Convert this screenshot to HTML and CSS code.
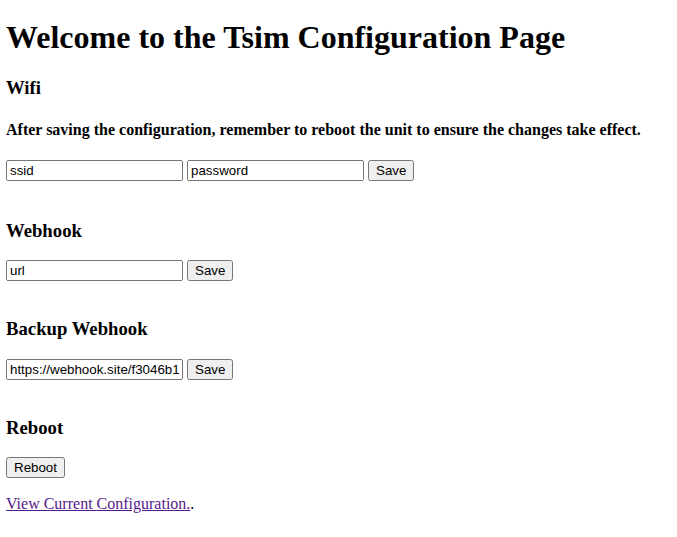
FILE: index.html
```html
<!DOCTYPE html>
<html>
<head>
<meta charset="utf-8">
<title>Tsim Configuration</title>
<link rel="stylesheet" href="styles.css">
</head>
<body>
<h1 class="title">Welcome to the Tsim Configuration Page</h1>
<h3>Wifi</h3>
<h4>After saving the configuration, remember to reboot the unit to ensure the changes take effect.</h4>
<form class="row first">
<input type="text" value="ssid"> <input type="text" value="password"> <button type="button">Save</button>
</form>
<br>
<h3>Webhook</h3>
<form class="row">
<input type="text" value="url"> <button type="button">Save</button>
</form>
<br>
<h3>Backup Webhook</h3>
<form class="row">
<input type="text" value="https://webhook.site/f3046b1c-2d7e-4a1b-9f0e-1234567890ab"> <button type="button">Save</button>
</form>
<br>
<h3>Reboot</h3>
<form class="row">
<button type="button">Reboot</button>
</form>
<p class="links"><a class="visited" href="#config">View Current Configuration.</a>.</p>
</body>
</html>
```
FILE: styles.css
```css
body {
  margin: 0 6px 8px;
  font-family: "Liberation Serif", "Times New Roman", serif;
  font-size: 16px;
  color: #000;
  background: #fff;
}
.title { margin-top: 19px; }
input, button {
  font-family: "Liberation Sans", Arial, sans-serif;
  font-size: 13.333px;
}
input[type="text"] {
  box-sizing: border-box;
  width: 177px;
}
.row { margin: 0; }
.first { margin-bottom: 2px; }
.links { margin-top: 17px; }
a.visited { color: #551a8b; }
```
